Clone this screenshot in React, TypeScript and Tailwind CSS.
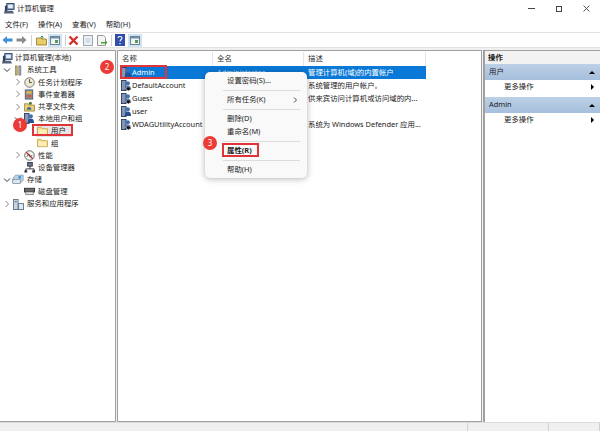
import type { ReactNode } from "react";

const font = "font-['Noto_Sans','Noto_Sans_CJK_SC',sans-serif]";

function ComputerIcon() {
  return (
    <svg width="11" height="11" viewBox="0 0 12 12" className="shrink-0">
      <rect x="3" y="0.500" width="8" height="6.500" fill="#8ba3c4" stroke="#33476b" />
      <rect x="4.500" y="2" width="5" height="3.500" fill="#e8f0fa" />
      <path d="M0.500 8.500h9l1.500 3H0z" fill="#56637a" />
      <rect x="1" y="3" width="2.500" height="6" fill="#34405a" />
    </svg>
  );
}

function UserIcon({ down }: { down?: boolean }) {
  return (
    <svg width="11" height="11" viewBox="0 0 12 12" className="shrink-0">
      <rect x="0.500" y="0.500" width="5" height="11" fill="#8296b8" stroke="#2f3d5c" />
      <circle cx="7.500" cy="3.500" r="2.200" fill="#3d6fb0" />
      <path d="M4 11c0-3.500 1.500-5 3.500-5s3.500 1.500 3.500 5z" fill="#2a4f8f" />
      {down && <path d="M6 7.500h4v1.500h1.500l-3.500 3-3.500-3H6z" fill="#111" stroke="#fff" strokeWidth="0.500" />}
    </svg>
  );
}

function FolderIcon() {
  return (
    <svg width="11" height="10" viewBox="0 0 12 11" className="shrink-0">
      <path d="M0.500 9.500V1.500h4l1 1.500h6v6.500z" fill="#f6dc8c" stroke="#c9a94f" />
      <rect x="1.500" y="4" width="9" height="5" fill="#fbeeb9" />
    </svg>
  );
}

function ToolsIcon() {
  return (
    <svg width="10" height="11" viewBox="0 0 12 12">
      <rect x="3" y="0.500" width="2" height="11" fill="#d2b04f" stroke="#6b5a28" strokeWidth="0.600" />
      <rect x="7" y="0.500" width="2.500" height="11" fill="#9ea8b5" stroke="#4c5561" strokeWidth="0.600" />
    </svg>
  );
}

function ClockIcon() {
  return (
    <svg width="11" height="11" viewBox="0 0 12 12">
      <circle cx="6" cy="6" r="5.200" fill="#efe8d2" stroke="#6f6f6f" />
      <path d="M6 2.500V6h2.500" fill="none" stroke="#444" />
    </svg>
  );
}

function EventIcon() {
  return (
    <svg width="10" height="11" viewBox="0 0 12 12">
      <rect x="1.500" y="0.500" width="9" height="11" fill="#8a95a5" stroke="#4d5563" />
      <rect x="3" y="2" width="6" height="3" fill="#e7b53f" />
      <rect x="3" y="6.500" width="6" height="3" fill="#c95f3f" />
    </svg>
  );
}

function ShareIcon() {
  return (
    <svg width="11" height="11" viewBox="0 0 12 12">
      <path d="M0.500 11V3h4l1 1.500h6V11z" fill="#e9cf7a" stroke="#a98c3c" />
      <circle cx="7" cy="2.500" r="1.700" fill="#4a7a3c" />
      <path d="M3 9.500c0-2 1-3 2.500-3S8 7.500 8 9.500z" fill="#3b6f95" />
    </svg>
  );
}

function PerfIcon() {
  return (
    <svg width="11" height="11" viewBox="0 0 12 12">
      <circle cx="6" cy="6" r="5.200" fill="#f5f5f5" stroke="#5a5a5a" />
      <path d="M2.500 2.500l7 7" stroke="#c7342c" strokeWidth="1.500" />
      <path d="M3 7.500l2-3 2 3 2-2" fill="none" stroke="#333" strokeWidth="0.800" />
    </svg>
  );
}

function DeviceIcon() {
  return (
    <svg width="11" height="11" viewBox="0 0 12 12">
      <rect x="4" y="0.500" width="5" height="4" fill="#6f7c8f" stroke="#2c3442" />
      <path d="M6.500 4.500v3M2 10V7.500h9V10" fill="none" stroke="#2c3442" />
      <rect x="0.500" y="9" width="3" height="2.500" fill="#2c3442" />
      <rect x="9" y="9" width="3" height="2.500" fill="#2c3442" />
    </svg>
  );
}

function StorageIcon() {
  return (
    <svg width="12" height="11" viewBox="0 0 14 12">
      <path d="M1 5l3-4h9v6l-3 3H1z" fill="#b9d4ea" stroke="#5b84a8" strokeWidth="0.700" />
      <rect x="1" y="6" width="9" height="4.500" fill="#dfe8f0" stroke="#6a7a8a" strokeWidth="0.700" />
      <circle cx="9" cy="3.500" r="1.500" fill="#3a8ac4" />
    </svg>
  );
}

function DiskIcon() {
  return (
    <svg width="11" height="11" viewBox="0 0 12 12">
      <rect x="0.500" y="2.500" width="11" height="4" fill="#6a6a6a" stroke="#333" />
      <rect x="2" y="6.500" width="8" height="3" fill="#e8e8e8" stroke="#555" strokeWidth="0.700" />
    </svg>
  );
}

function ServiceIcon() {
  return (
    <svg width="11" height="11" viewBox="0 0 12 12">
      <rect x="0.500" y="0.500" width="5" height="11" fill="#c7d4e2" stroke="#5f7388" />
      <rect x="6" y="5" width="5.500" height="6.500" fill="#e0e8f0" stroke="#5f7388" />
      <rect x="2" y="2.500" width="2" height="1" fill="#33557a" />
    </svg>
  );
}

function PaneIcon() {
  return (
    <span className="flex h-[13px] w-[14px] items-center justify-center bg-[#cde4f7]">
      <svg width="10" height="9" viewBox="0 0 10 9">
        <rect x="0.500" y="0.500" width="9" height="8" fill="#f3f3f3" stroke="#6f7f8f" />
        <rect x="1" y="1" width="8" height="1.500" fill="#6f8fb0" />
        <rect x="5" y="4" width="3" height="3" fill="#4f9f4f" />
      </svg>
    </span>
  );
}

function Chevron({ dir }: { dir: "right" | "down" | "none" }) {
  if (dir === "none") return <span className="w-[8px] shrink-0" />;
  return (
    <svg width="8" height="8" viewBox="0 0 8 8" className="shrink-0">
      <path
        d={dir === "right" ? "M2.500 1l3 3-3 3" : "M1 2.500l3 3 3-3"}
        fill="none"
        stroke={dir === "right" ? "#8a8a8a" : "#333"}
        strokeWidth="1"
      />
    </svg>
  );
}

type TreeItem = {
  label: string;
  indent: string;
  chevron: "right" | "down" | "none";
  icon: ReactNode;
  selected?: boolean;
};

const tree: TreeItem[] = [
  { label: "系统工具", indent: "pl-[3px]", chevron: "down", icon: <ToolsIcon /> },
  { label: "任务计划程序", indent: "pl-[14px]", chevron: "right", icon: <ClockIcon /> },
  { label: "事件查看器", indent: "pl-[14px]", chevron: "right", icon: <EventIcon /> },
  { label: "共享文件夹", indent: "pl-[14px]", chevron: "right", icon: <ShareIcon /> },
  { label: "本地用户和组", indent: "pl-[14px]", chevron: "down", icon: <UserIcon /> },
  { label: "用户", indent: "pl-[27px]", chevron: "none", icon: <FolderIcon />, selected: true },
  { label: "组", indent: "pl-[27px]", chevron: "none", icon: <FolderIcon /> },
  { label: "性能", indent: "pl-[14px]", chevron: "right", icon: <PerfIcon /> },
  { label: "设备管理器", indent: "pl-[14px]", chevron: "none", icon: <DeviceIcon /> },
  { label: "存储", indent: "pl-[3px]", chevron: "down", icon: <StorageIcon /> },
  { label: "磁盘管理", indent: "pl-[14px]", chevron: "none", icon: <DiskIcon /> },
  { label: "服务和应用程序", indent: "pl-[3px]", chevron: "right", icon: <ServiceIcon /> },
];

const users = [
  { name: "Admin", desc: "管理计算机(域)的内置帐户", selected: true },
  { name: "DefaultAccount", desc: "系统管理的用户帐户。", down: true },
  { name: "Guest", desc: "供来宾访问计算机或访问域的内...", down: true },
  { name: "user", desc: "" },
  { name: "WDAGUtilityAccount", desc: "系统为 Windows Defender 应用...", down: true },
];

function Badge({ n, className }: { n: number; className: string }) {
  return (
    <div className={`absolute flex h-[14px] w-[14px] items-center justify-center rounded-full bg-[#ec3b36] text-[8px] leading-none text-white ${className}`}>
      {n}
    </div>
  );
}

function MenuSep() {
  return <div className="my-[2.500px] ml-[14px] mr-[7px] h-px bg-[#dcdcdc]" />;
}

function ActionBar({ label }: { label: string }) {
  return (
    <div className="flex h-[16px] items-center justify-between bg-gradient-to-b from-[#bcd0e6] to-[#a6bfdc] pl-[4px] pr-[5px]">
      <span>{label}</span>
      <span className="h-0 w-0 border-x-[3px] border-b-[3px] border-x-transparent border-b-black" />
    </div>
  );
}

function MoreActions() {
  return (
    <div className="flex h-[17px] items-center justify-between pb-[3px] pl-[19px] pr-[6px]">
      <span>更多操作</span>
      <span className="h-0 w-0 border-y-[3px] border-l-[3px] border-y-transparent border-l-black" />
    </div>
  );
}

export default function App() {
  return (
    <div className={`relative flex h-[431px] w-[600px] flex-col overflow-hidden bg-white text-[7.400px] leading-none text-[#1a1a1a] ${font}`}>
      {/* title bar */}
      <div className="flex h-[17px] shrink-0 items-center pl-[4px]">
        <ComputerIcon />
        <span className="ml-[2px]">计算机管理</span>
        <div className="ml-auto flex items-center gap-[21px] pr-[10px]">
          <span className="h-px w-[7px] bg-[#444]" />
          <span className="h-[6px] w-[6px] border border-[#444]" />
          <svg width="7" height="7" viewBox="0 0 7 7">
            <path d="M0.500 0.500l6 6M6.500 0.500l-6 6" stroke="#444" strokeWidth="0.900" />
          </svg>
        </div>
      </div>

      {/* menu */}
      <div className="flex h-[15px] shrink-0 items-center gap-[10px] pl-[5px]">
        <span>文件(F)</span>
        <span>操作(A)</span>
        <span>查看(V)</span>
        <span>帮助(H)</span>
      </div>

      {/* toolbar */}
      <div className="flex h-[16px] shrink-0 items-center border-y border-[#e2e2e2] pl-[2px]">
        <svg width="11" height="10" viewBox="0 0 11 10"><path d="M0.500 5L5 1v2.500h5.500v3H5V9z" fill="#3d8fd6" /></svg>
        <svg width="11" height="10" viewBox="0 0 11 10" className="ml-[3px]"><path d="M10.500 5L6 1v2.500H0.500v3H6V9z" fill="#8a8a8a" /></svg>
        <span className="ml-[4px] h-[11px] w-px bg-[#cfcfcf]" />
        <svg width="11" height="11" viewBox="0 0 11 11" className="ml-[4px]"><path d="M0.500 10V3h4l1 1h5v6z" fill="#e8cd6c" stroke="#a58a35" /><path d="M6 4V1M4.500 2.500L6 1l1.500 1.500" fill="none" stroke="#3c8a3c" /></svg>
        <span className="ml-[1px]"><PaneIcon /></span>
        <span className="ml-[3px] h-[11px] w-px bg-[#cfcfcf]" />
        <svg width="11" height="11" viewBox="0 0 11 11" className="ml-[2px]"><path d="M1.500 1.500l8 8M9.500 1.500l-8 8" stroke="#d3302b" strokeWidth="2.400" /></svg>
        <svg width="12" height="11" viewBox="0 0 12 11" className="ml-[3px]"><rect x="1.500" y="0.500" width="9" height="10" fill="#eef1f4" stroke="#9aa5b0" /><rect x="3.500" y="3" width="5" height="5" fill="#d5dde6" /></svg>
        <svg width="12" height="11" viewBox="0 0 12 11" className="ml-[2px]"><path d="M1.500 0.500h6l2 2v8h-8z" fill="#f4f4f4" stroke="#9a9a9a" /><path d="M5 7h4V5l2.500 2.500L9 10V8.500H5z" fill="#4f9f3f" /></svg>
        <span className="ml-[3px] h-[11px] w-px bg-[#cfcfcf]" />
        <svg width="10" height="12" viewBox="0 0 10 12" className="ml-[3px]"><rect width="10" height="12" fill="#2f4fa8" /><path d="M3 4c0-2 4-2 4 0 0 1.500-2 1.500-2 3.500M5 9v1.200" fill="none" stroke="#fff" strokeWidth="1.100" /></svg>
        <span className="ml-[3px]"><PaneIcon /></span>
      </div>

      {/* panes */}
      <div className="flex min-h-0 flex-1 gap-px bg-[#f0f0f0] pt-[2px]">
        <div className="flex w-[116px] shrink-0 flex-col border-r border-b border-t border-[#a0a0a0] bg-white pt-[1px]">
          <div className="flex h-[12px] items-center gap-[2px] pl-[2px]">
            <ComputerIcon />
            <span>计算机管理(本地)</span>
          </div>
          {tree.map((item) => (
            <div key={item.label} className={`flex h-[12.200px] items-center gap-px ${item.indent}`}>
              <Chevron dir={item.chevron} />
              <div className={`flex h-[11px] items-center ${item.selected ? "bg-[#e5e5e5] pr-[6px]" : ""}`}>
                <span className="flex w-[12px] shrink-0 justify-center">{item.icon}</span>
                <span className="pl-[3px]">{item.label}</span>
              </div>
            </div>
          ))}
        </div>

        <div className="flex w-[365px] shrink-0 flex-col border-x border-b border-t border-[#a0a0a0] bg-white pt-[1px]">
          <div className="flex h-[14px] items-center">
            <div className="flex h-full w-[95px] items-center border-r border-[#e5e5e5] pl-[4px] text-[#333]">名称</div>
            <div className="flex h-full w-[91px] items-center border-r border-[#e5e5e5] pl-[4px] text-[#333]">全名</div>
            <div className="flex h-full w-[122px] items-center border-r border-[#e5e5e5] pl-[4px] text-[#333]">描述</div>
          </div>
          {users.map((u) => (
            <div key={u.name} className="flex h-[13px] items-center">
              <div className={`ml-[2px] flex h-full w-[306px] items-center ${u.selected ? "bg-[#0a78d7] text-white" : ""}`}>
                <div className="flex w-[93px] items-center pl-px">
                  <UserIcon down={u.down} />
                  <span className="whitespace-nowrap">{u.name}</span>
                </div>
                <div className="w-[91px] whitespace-nowrap pl-[4px] text-[#bcd9f2]">{u.selected ? "Administrator" : ""}</div>
                <div className="whitespace-nowrap pl-[4px]">{u.desc}</div>
              </div>
            </div>
          ))}
        </div>

        <div className="flex min-w-0 flex-1 flex-col border-l-2 border-t border-[#a0a0a0] bg-white">
          <div className="flex h-[13px] items-center bg-[#f2f2f2] pl-[3px] font-bold">操作</div>
          <ActionBar label="用户" />
          <MoreActions />
          <ActionBar label="Admin" />
          <MoreActions />
        </div>
      </div>

      {/* status bar */}
      <div className="flex h-[9px] shrink-0 justify-end border-t border-[#dcdcdc] bg-[#f0f0f0]">
        <div className="w-[81px] border-l border-[#d0d0d0]" />
        <div className="w-[52px] border-l border-r border-[#d0d0d0]" />
      </div>

      {/* context menu */}
      <div className="absolute left-[205px] top-[72px] w-[102px] rounded-[5px] bg-[#f9f9f9] py-[2px] pl-[4px] shadow-[0_1px_6px_rgba(0,0,0,0.3)]">
        <div className="flex h-[13px] items-center pl-[18px]">设置密码(S)...</div>
        <MenuSep />
        <div className="flex h-[13px] items-center justify-between pl-[18px] pr-[9px]">
          <span>所有任务(K)</span>
          <svg width="5" height="6" viewBox="0 0 5 6"><path d="M1 0.500l2.500 2.500L1 5.500" fill="none" stroke="#333" strokeWidth="0.900" /></svg>
        </div>
        <MenuSep />
        <div className="flex h-[13px] items-center pl-[18px]">删除(D)</div>
        <div className="flex h-[13px] items-center pl-[18px]">重命名(M)</div>
        <MenuSep />
        <div className="flex h-[13px] items-center pl-[18px] font-bold">属性(R)</div>
        <MenuSep />
        <div className="flex h-[13px] items-center pl-[18px]">帮助(H)</div>
      </div>

      {/* annotations */}
      <div className="absolute left-[32px] top-[124px] h-[12px] w-[41px] border-2 border-[#e0333a]" />
      <div className="absolute left-[120px] top-[65px] h-[14px] w-[47px] border-2 border-[#e0333a]" />
      <div className="absolute left-[222px] top-[143px] h-[14px] w-[37px] border-2 border-[#e0333a]" />
      <Badge n={1} className="left-[13px] top-[118px]" />
      <Badge n={2} className="left-[100px] top-[60px]" />
      <Badge n={3} className="left-[203px] top-[136px]" />
    </div>
  );
}
